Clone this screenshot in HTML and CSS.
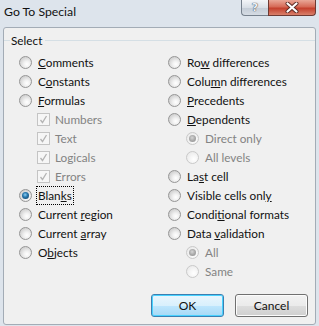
FILE: index.html
```html
<!DOCTYPE html>
<html lang="en">
<head>
  <meta charset="UTF-8" />
  <meta name="viewport" content="width=device-width, initial-scale=1.0"/>
  <title>Go To Special</title>
  <link rel="stylesheet" href="styles.css">
</head>
<body>
  <div class="window">
    <div class="titlebar">
      <span class="title">Go To Special</span>
      <div class="caption-buttons">
        <div class="btn-help"><span>?</span></div>
        <div class="btn-close">
          <svg width="14" height="11" viewBox="0 0 14 11">
            <path d="M2.5 1.5 L11.5 9.5 M11.5 1.5 L2.5 9.5" stroke="#5a2a24" stroke-width="4" stroke-linecap="round"/>
            <path d="M2.5 1.5 L11.5 9.5 M11.5 1.5 L2.5 9.5" stroke="#ffffff" stroke-width="2.2" stroke-linecap="round"/>
          </svg>
        </div>
      </div>
    </div>

    <div class="client">
      <div class="group-head">
        <span class="rule short"></span>
        <span class="legend">Select</span>
        <span class="rule"></span>
      </div>

      <div class="options">
        <div class="col">
          <div class="opt"><span class="radio"></span><span><u>C</u>omments</span></div>
          <div class="opt"><span class="radio"></span><span>C<u>o</u>nstants</span></div>
          <div class="opt"><span class="radio"></span><span><u>F</u>ormulas</span></div>
          <div class="opt sub off"><span class="check"><svg width="11" height="11" viewBox="0 0 11 11"><path d="M2.5 6 L4.5 8.5 L8.5 2" fill="none" stroke="#b4b4b4" stroke-width="1.3"/></svg></span><span>Numbers</span></div>
          <div class="opt sub off"><span class="check"><svg width="11" height="11" viewBox="0 0 11 11"><path d="M2.5 6 L4.5 8.5 L8.5 2" fill="none" stroke="#b4b4b4" stroke-width="1.3"/></svg></span><span>Text</span></div>
          <div class="opt sub off"><span class="check"><svg width="11" height="11" viewBox="0 0 11 11"><path d="M2.5 6 L4.5 8.5 L8.5 2" fill="none" stroke="#b4b4b4" stroke-width="1.3"/></svg></span><span>Logicals</span></div>
          <div class="opt sub off"><span class="check"><svg width="11" height="11" viewBox="0 0 11 11"><path d="M2.5 6 L4.5 8.5 L8.5 2" fill="none" stroke="#b4b4b4" stroke-width="1.3"/></svg></span><span>Errors</span></div>
          <div class="opt"><span class="radio on"></span><span class="focus">Blan<u>k</u>s</span></div>
          <div class="opt"><span class="radio"></span><span>Current <u>r</u>egion</span></div>
          <div class="opt"><span class="radio"></span><span>Current <u>a</u>rray</span></div>
          <div class="opt"><span class="radio"></span><span>O<u>b</u>jects</span></div>
        </div>
        <div class="col">
          <div class="opt"><span class="radio"></span><span>Ro<u>w</u> differences</span></div>
          <div class="opt"><span class="radio"></span><span>Colu<u>m</u>n differences</span></div>
          <div class="opt"><span class="radio"></span><span><u>P</u>recedents</span></div>
          <div class="opt"><span class="radio"></span><span><u>D</u>ependents</span></div>
          <div class="opt sub off"><span class="radio on"></span><span>Direct only</span></div>
          <div class="opt sub off"><span class="radio"></span><span>All levels</span></div>
          <div class="opt"><span class="radio"></span><span>La<u>s</u>t cell</span></div>
          <div class="opt"><span class="radio"></span><span>Visible cells onl<u>y</u></span></div>
          <div class="opt"><span class="radio"></span><span>Condi<u>t</u>ional formats</span></div>
          <div class="opt"><span class="radio"></span><span>Data <u>v</u>alidation</span></div>
          <div class="opt sub off"><span class="radio on"></span><span>All</span></div>
          <div class="opt sub off"><span class="radio"></span><span>Same</span></div>
        </div>
      </div>

      <div class="buttons">
        <button class="btn default">OK</button>
        <button class="btn">Cancel</button>
      </div>
    </div>
  </div>
</body>
</html>
```

FILE: styles.css
```css
body {
  margin: 0;
  font-family: "Segoe UI", Lato, sans-serif;
  font-size: 11.75px;
  color: #111111;
}
.window {
  width: 319px;
  height: 326px;
  background-color: #dde4ec;
  overflow: hidden;
}
.titlebar {
  height: 27px;
  display: flex;
  justify-content: space-between;
  align-items: flex-start;
}
.title {
  padding-left: 4px;
  font-size: 12.25px;
  line-height: 24px;
}
.caption-buttons {
  display: flex;
  margin-right: 3px;
  height: 16px;
}
.btn-help {
  width: 26px;
  border: 1px solid #77818d;
  border-top: none;
  border-right: none;
  border-radius: 0 0 0 4px;
  background: linear-gradient(#f3f5f8, #d9dfe6 50%, #c5cdd7 55%, #d6dce4);
  display: flex;
  justify-content: center;
  align-items: center;
}
.btn-help span {
  color: #eef1f5;
  font-family: "DejaVu Sans", sans-serif;
  font-weight: bold;
  font-size: 11px;
  line-height: 14px;
  text-shadow: 0 0 1px #3b4450, 0 0 1px #3b4450;
}
.btn-close {
  width: 46px;
  border: 1px solid #6e3a33;
  border-top: none;
  border-radius: 0 0 4px 0;
  background: linear-gradient(#e9a797, #d66a57 45%, #c4402d 55%, #d9806b);
  display: flex;
  justify-content: center;
  align-items: center;
}
.client {
  margin-left: 3px;
  width: 311px;
  height: 296px;
  border: 1px solid #a3acb6;
  border-radius: 3px;
  background-color: #f0f0f0;
  display: flex;
  flex-direction: column;
}
.group-head {
  height: 25px;
  display: flex;
  align-items: center;
}
.rule {
  flex: 1;
  height: 1px;
  background-color: #d5dfe5;
}
.rule.short {
  flex: none;
  width: 6px;
}
.legend {
  padding: 0 3px 0 1px;
}
.options {
  display: flex;
  padding-left: 15px;
}
.col:first-child {
  width: 149px;
}
.opt {
  height: 19px;
  display: flex;
  align-items: center;
  white-space: nowrap;
}
.opt.sub {
  padding-left: 18px;
}
.opt.off {
  color: #838383;
}
.radio {
  width: 11px;
  height: 11px;
  margin-right: 6px;
  border: 1px solid #969696;
  border-radius: 50%;
  background: radial-gradient(circle at 62% 65%, #ffffff 0, #f1f1f1 30%, #d7d7d7 65%, #c2c2c2 100%);
  position: relative;
  flex: none;
}
.radio.on::after {
  content: "";
  position: absolute;
  left: 2px;
  top: 2px;
  width: 7px;
  height: 7px;
  border-radius: 50%;
  background: radial-gradient(circle at 45% 40%, #8fd1f5 0, #2a7ab0 40%, #0c3656 100%);
}
.off .radio {
  border-color: #c9c9c9;
  background: radial-gradient(circle at 62% 65%, #ffffff 0, #f5f5f5 40%, #e4e4e4 100%);
}
.off .radio.on::after {
  background: radial-gradient(circle at 45% 40%, #d6d6d6 0, #a9a9a9 50%, #8f8f8f 100%);
}
.check {
  width: 11px;
  height: 11px;
  margin-right: 5px;
  border: 1px solid #c4c4c4;
  background-color: #f6f6f6;
  display: flex;
  flex: none;
}
.focus {
  outline: 1px dotted #000000;
  outline-offset: 1px;
}
.buttons {
  margin-top: auto;
  display: flex;
  justify-content: flex-end;
  gap: 11px;
  padding: 0 7px 7px 0;
}
.btn {
  width: 73px;
  height: 23px;
  padding: 0;
  font-family: inherit;
  font-size: 12px;
  color: #111111;
  border: 1px solid #707070;
  border-radius: 3px;
  background: linear-gradient(#f2f2f2, #ebebeb 50%, #dddddd 51%, #cfcfcf);
  box-shadow: inset 0 0 0 1px #fcfcfc;
}
.btn.default {
  border-color: #3c7fb1;
  background: linear-gradient(#eaf6fd, #d9f0fc 50%, #bee6fd 51%, #a7d9f5);
  box-shadow: inset 0 0 0 1px #48d2ff;
}
```
